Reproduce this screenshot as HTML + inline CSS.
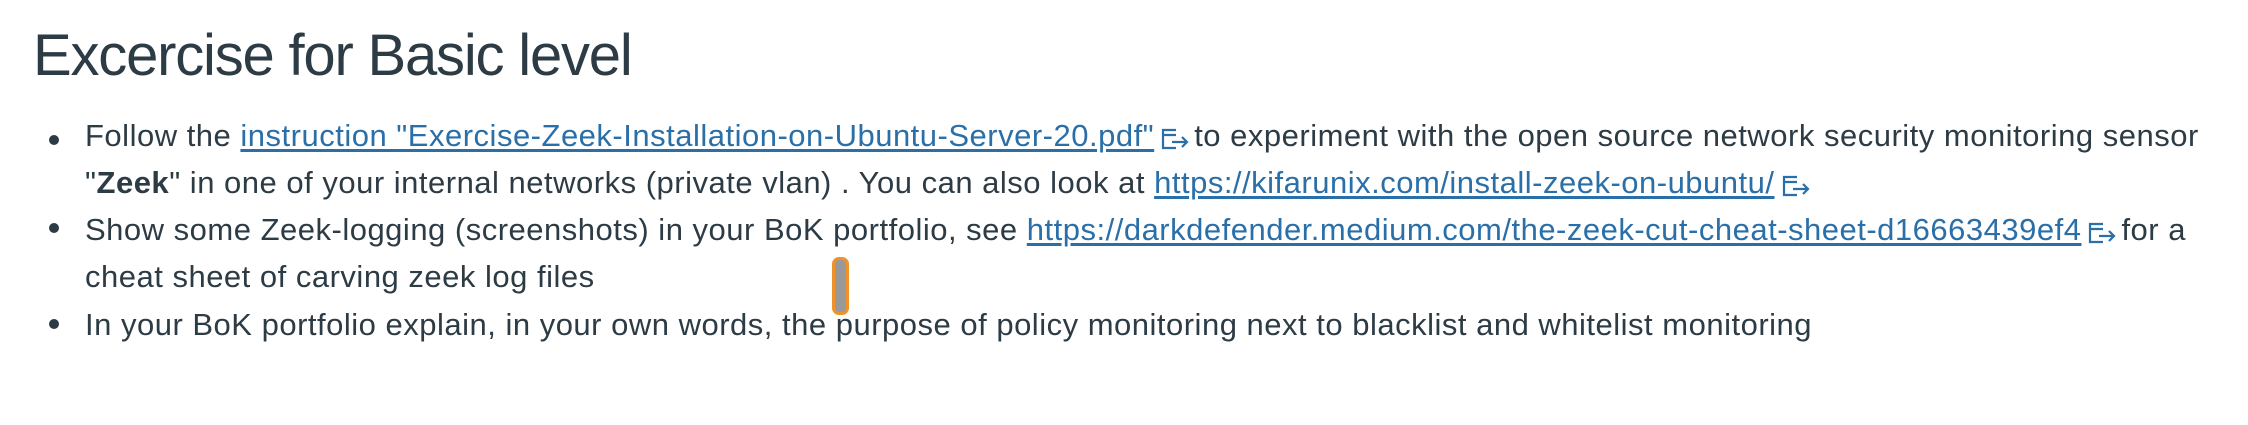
<!DOCTYPE html>
<html><head><meta charset="utf-8"><style>
html,body{margin:0;padding:0;background:#fff;width:2248px;height:425px;overflow:hidden}
body{font-family:"Liberation Sans",sans-serif;color:#2d3b45;position:relative}
h1{position:absolute;left:33px;top:22px;margin:0;font-weight:normal;font-size:58px;letter-spacing:-1.2px;white-space:nowrap}
.l{position:absolute;left:85px;font-size:31px;letter-spacing:0.5px;white-space:nowrap;line-height:40px}
.b{position:absolute;left:49px;width:10px;height:10px;border-radius:50%;background:#2d3b45}
a{color:#2a6fa8;text-decoration:underline;text-underline-offset:3px}
svg.e{width:30px;height:26px;vertical-align:-6px;margin:0 4px 0 6px}
.cur{position:absolute;left:832px;top:257px;width:11px;height:52px;border:3px solid #f0922a;border-radius:7px;background:#999}
</style></head><body>
<h1>Excercise for Basic level</h1>
<div class="b" style="top:135px"></div>
<div class="b" style="top:223px"></div>
<div class="b" style="top:319px"></div>
<div class="l" style="top:116px">Follow the <a>instruction "Exercise-Zeek-Installation-on-Ubuntu-Server-20.pdf"</a><svg class="e" viewBox="0 0 30 26"><path d="M16 4H3v18h13M3 9h13" fill="none" stroke="#2a6fa8" stroke-width="2.2"/><path d="M12 16h15M22 11l5 5-5 5" fill="none" stroke="#2a6fa8" stroke-width="2.2"/></svg>to experiment with the open source network security monitoring sensor</div>
<div class="l" style="top:163px">"<b>Zeek</b>" in one of your internal networks (private vlan) . You can also look at <a>https://kifarunix.com/install-zeek-on-ubuntu/</a><svg class="e" viewBox="0 0 30 26"><path d="M16 4H3v18h13M3 9h13" fill="none" stroke="#2a6fa8" stroke-width="2.2"/><path d="M12 16h15M22 11l5 5-5 5" fill="none" stroke="#2a6fa8" stroke-width="2.2"/></svg></div>
<div class="l" style="top:210px">Show some Zeek-logging (screenshots) in your BoK portfolio, see <a>https://darkdefender.medium.com/the-zeek-cut-cheat-sheet-d16663439ef4</a><svg class="e" viewBox="0 0 30 26"><path d="M16 4H3v18h13M3 9h13" fill="none" stroke="#2a6fa8" stroke-width="2.2"/><path d="M12 16h15M22 11l5 5-5 5" fill="none" stroke="#2a6fa8" stroke-width="2.2"/></svg>for a</div>
<div class="l" style="top:257px">cheat sheet of carving zeek log files</div>
<div class="l" style="top:305px">In your BoK portfolio explain, in your own words, the purpose of policy monitoring next to blacklist and whitelist monitoring</div>
<div class="cur"></div>
</body></html>
